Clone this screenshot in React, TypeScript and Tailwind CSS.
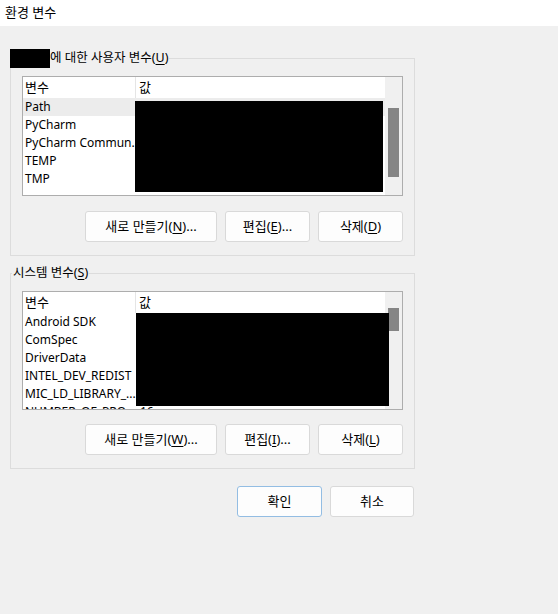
import React from "react"

const font = { fontFamily: '"Noto Sans", "Noto Sans CJK KR", sans-serif' }

type Row = { name: string; value?: string; selected?: boolean }

function Mn({ children }: { children: string }) {
  return <span className="underline underline-offset-2">{children}</span>
}

function Button({ children, width, primary }: { children: React.ReactNode; width: string; primary?: boolean }) {
  return (
    <button
      className={`${width} h-[31px] rounded-[3px] border bg-[#fdfdfd] text-[13px] text-black flex items-center justify-center ${
        primary ? 'border-[#93bde3]' : 'border-[#d9d9d9]'
      }`}
    >
      {children}
    </button>
  )
}

function ListBox({
  rows,
  height,
  thumbTop,
  thumbHeight,
  redact,
}: {
  rows: Row[]
  height: string
  thumbTop: string
  thumbHeight: string
  redact: string
}) {
  return (
    <div className={`relative ml-[11px] w-[381px] ${height} border border-[#adadad] bg-white flex overflow-hidden`}>
      <div className="w-[362px] flex flex-col">
        {/* header */}
        <div className="h-[21px] flex items-center shrink-0 bg-white text-[13px]">
          <div className="w-[113px] pl-[2px] border-r border-[#e5e5e5] h-full flex items-center">변수</div>
          <div className="pl-[3px]">값</div>
        </div>
        {rows.map((r) => (
          <div
            key={r.name}
            className={`h-[18px] shrink-0 flex items-center ${r.selected ? 'bg-[#ececec]' : ''}`}
          >
            <div className="w-[113px] shrink-0 pl-[2px] whitespace-nowrap">{r.name}</div>
            <div className="pl-[4px] whitespace-nowrap">{r.value ?? ''}</div>
          </div>
        ))}
      </div>
      {/* scrollbar */}
      <div className="w-[17px] bg-[#f0f0f0] flex flex-col items-center">
        <div className={`${thumbTop} ${thumbHeight} w-[11px] bg-[#858585]`} />
      </div>
      {/* redaction */}
      <div className={`absolute bg-black ${redact}`} />
    </div>
  )
}

export default function App() {
  return (
    <div className="w-[558px] h-[614px] bg-[#f0f0f0] text-[12px] text-black overflow-hidden" style={font}>
      {/* title bar */}
      <div className="h-[26px] bg-white pl-[5px] flex items-center text-[13px]">환경 변수</div>

      <div className="pl-[10px] pt-[32px]">
        {/* user variables */}
        <div className="w-[405px] h-[198px] border border-[#dcdcdc] flex flex-col">
          <div className="-mt-[10px] -ml-[1px] h-[19px] w-fit flex items-center bg-[#f0f0f0] pr-[1px] text-[12.5px]">
            <div className="w-[40px] h-[19px] bg-black" />
            <span>에 대한 사용자 변수(<Mn>U</Mn>)</span>
          </div>
          <div className="mt-[8px]">
            <ListBox
              height="h-[120px]"
              thumbTop="mt-[31px]"
              thumbHeight="h-[69px]"
              redact="left-[112px] top-[24px] w-[248px] h-[91px]"
              rows={[
                { name: 'Path', selected: true },
                { name: 'PyCharm' },
                { name: 'PyCharm Commun...' },
                { name: 'TEMP' },
                { name: 'TMP' },
              ]}
            />
          </div>
          <div className="mt-[15px] mr-[11px] flex justify-end gap-[8px]">
            <Button width="w-[132px]">
              <span>새로 만들기(<Mn>N</Mn>)...</span>
            </Button>
            <Button width="w-[85px]">
              <span>편집(<Mn>E</Mn>)...</span>
            </Button>
            <Button width="w-[85px]">
              <span>삭제(<Mn>D</Mn>)</span>
            </Button>
          </div>
        </div>

        {/* system variables */}
        <div className="mt-[17px] w-[405px] h-[196px] border border-[#dcdcdc] flex flex-col">
          <div className="-mt-[10px] ml-[1px] h-[19px] w-fit flex items-center bg-[#f0f0f0] px-[1px] text-[12.5px]">
            <span>시스템 변수(<Mn>S</Mn>)</span>
          </div>
          <div className="mt-[8px]">
            <ListBox
              height="h-[119px]"
              thumbTop="mt-[16px]"
              thumbHeight="h-[23px]"
              redact="left-[113px] top-[21px] w-[253px] h-[93px]"
              rows={[
                { name: 'Android SDK' },
                { name: 'ComSpec' },
                { name: 'DriverData' },
                { name: 'INTEL_DEV_REDIST' },
                { name: 'MIC_LD_LIBRARY_...' },
                { name: 'NUMBER_OF_PRO...', value: '16' },
              ]}
            />
          </div>
          <div className="mt-[14px] mr-[11px] flex justify-end gap-[8px]">
            <Button width="w-[132px]">
              <span>새로 만들기(<Mn>W</Mn>)...</span>
            </Button>
            <Button width="w-[85px]">
              <span>편집(<Mn>I</Mn>)...</span>
            </Button>
            <Button width="w-[85px]">
              <span>삭제(<Mn>L</Mn>)</span>
            </Button>
          </div>
        </div>

        {/* dialog buttons */}
        <div className="mt-[17px] w-[404px] flex justify-end gap-[8px]">
          <Button width="w-[85px]" primary>
            확인
          </Button>
          <Button width="w-[84px]">취소</Button>
        </div>
      </div>
    </div>
  )
}
